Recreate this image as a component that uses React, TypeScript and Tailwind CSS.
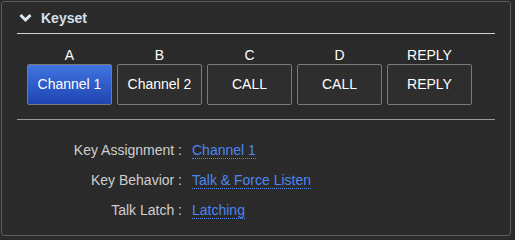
import React from "react";

const keys = [
  { label: "A", text: "Channel 1", active: true },
  { label: "B", text: "Channel 2" },
  { label: "C", text: "CALL" },
  { label: "D", text: "CALL" },
  { label: "REPLY", text: "REPLY" },
];

const rows = [
  { k: "Key Assignment", v: "Channel 1" },
  { k: "Key Behavior", v: "Talk & Force Listen" },
  { k: "Talk Latch", v: "Latching" },
];

export default function App() {
  return (
    <div
      className="w-[515px] h-[240px] pl-[1px] pt-[1px] bg-[#2a2a2a] bg-[repeating-conic-gradient(#2d2d2d_0%_25%,#282828_0%_50%)] bg-[length:2px_2px]"
      style={{ fontFamily: '"Liberation Sans", Arial, sans-serif' }}
    >
      <div className="w-[510px] h-[235px] rounded-[3px] border border-[#5a5a5a] flex flex-col">
        <div className="mx-[15px] h-[32px] border-b border-[#d0d0d0] flex items-center pt-[1px]">
          <svg width="13" height="10" viewBox="0 0 13 10" className="ml-[2px]">
            <path d="M1.5 2 L6.5 7 L11.5 2" fill="none" stroke="#dfe8f2" strokeWidth="3" />
          </svg>
          <span className="ml-[9px] text-[14px] font-bold text-[#d4e0ee] leading-none">Keyset</span>
        </div>
        <div className="mx-[15px] h-[86px] border-b border-[#9a9a9a] flex gap-[5px] pl-[10px] pt-[12px]">
          {keys.map((k, i) => (
            <div key={i} className="flex flex-col items-center">
              <div className="h-[18px] text-[14px] leading-[18px] text-white">{k.label}</div>
              <div
                className={
                  "w-[85px] h-[41px] border border-[#7a7a7a] rounded-[2px] flex items-center justify-center text-[14px] text-white " +
                  (k.active ? "bg-gradient-to-b from-[#4174e0] to-[#1f45b2]" : "bg-[#2e2e2e]")
                }
              >
                {k.text}
              </div>
            </div>
          ))}
        </div>
        <div className="flex flex-col pt-[22px] gap-[13px]">
          {rows.map((r, i) => (
            <div key={i} className="flex items-center h-[17px]">
              <div className="w-[180px] text-right text-[14px] text-[#cfcfcf] whitespace-nowrap">
                {r.k} :
              </div>
              <div className="ml-[10px] text-[14px] text-[#4c86f2] leading-[16px] border-b border-dotted border-[#4c86f2] whitespace-nowrap">
                {r.v}
              </div>
            </div>
          ))}
        </div>
      </div>
    </div>
  );
}
